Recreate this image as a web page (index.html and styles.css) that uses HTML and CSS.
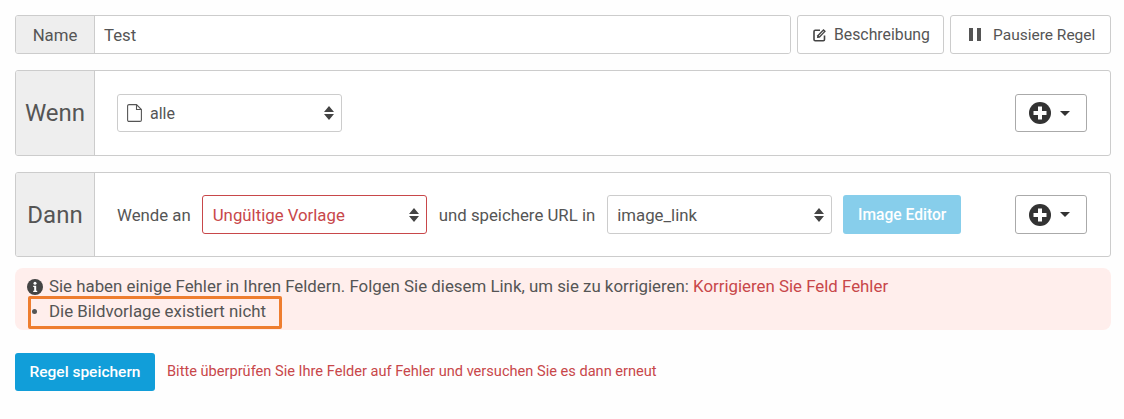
FILE: index.html
```html
<!DOCTYPE html>
<html lang="de">
<head>
<meta charset="utf-8">
<title>Regel</title>
<link rel="stylesheet" href="styles.css">
</head>
<body>
<main class="page">
  <div class="name-row">
    <div class="name-group">
      <span class="name-label">Name</span>
      <span class="name-input">Test</span>
    </div>
    <button class="btn btn-desc">
      <svg width="14" height="14" viewBox="0 0 14 14"><path d="M11.500 7.500V11.500a1.200 1.200 0 0 1-1.200 1.200H2.200A1.200 1.200 0 0 1 1 11.500V3.500a1.200 1.200 0 0 1 1.200-1.200H7" fill="none" stroke="#444" stroke-width="1.600"/><path d="M4.300 7.300 10.500.9l2.400 2.400-6.200 6.400-2.800.4z" fill="#444"/><path d="M5.800 7.700 10.400 3l.5.5-4.600 4.800z" fill="#fff"/></svg>
      <span>Beschreibung</span>
    </button>
    <button class="btn btn-pause">
      <svg width="12" height="13" viewBox="0 0 12 13"><rect x="0" y="0" width="4" height="13" fill="#555"/><rect x="8" y="0" width="4" height="13" fill="#555"/></svg>
      <span>Pausiere Regel</span>
    </button>
  </div>

  <section class="panel panel-when">
    <div class="panel-label">Wenn</div>
    <div class="panel-body">
      <div class="select select-when">
        <svg class="ico-file" width="15" height="18" viewBox="0 0 15 18"><path d="M.6 2a1.400 1.400 0 0 1 1.400-1.400H9.500L14.400 5.500V16a1.400 1.400 0 0 1-1.400 1.400H2A1.400 1.400 0 0 1 .6 16z M9.500.6V5.500H14.400" fill="none" stroke="#555" stroke-width="1.100"/></svg>
        <span class="select-text">alle</span>
        <svg class="carets" width="10" height="14" viewBox="0 0 10 14"><path d="M5 0 10 6H0zM5 14 0 8h10z" fill="#444"/></svg>
      </div>
      <button class="add-btn">
        <svg width="22" height="22" viewBox="0 0 22 22"><circle cx="11" cy="11" r="11" fill="#333"/><path d="M9 4.500h4V9h4.500v4H13v4.500H9V13H4.500V9H9z" fill="#fff"/></svg>
        <span class="caret"></span>
      </button>
    </div>
  </section>

  <section class="panel panel-then">
    <div class="panel-label">Dann</div>
    <div class="panel-body">
      <span class="inline-text">Wende an</span>
      <div class="select select-invalid">
        <span class="select-text">Ungültige Vorlage</span>
        <svg class="carets" width="10" height="14" viewBox="0 0 10 14"><path d="M5 0 10 6H0zM5 14 0 8h10z" fill="#444"/></svg>
      </div>
      <span class="inline-text text-save">und speichere URL in</span>
      <div class="select select-url">
        <span class="select-text">image_link</span>
        <svg class="carets" width="10" height="14" viewBox="0 0 10 14"><path d="M5 0 10 6H0zM5 14 0 8h10z" fill="#444"/></svg>
      </div>
      <button class="editor-btn">Image Editor</button>
      <button class="add-btn">
        <svg width="22" height="22" viewBox="0 0 22 22"><circle cx="11" cy="11" r="11" fill="#333"/><path d="M9 4.500h4V9h4.500v4H13v4.500H9V13H4.500V9H9z" fill="#fff"/></svg>
        <span class="caret"></span>
      </button>
    </div>
  </section>

  <div class="alert">
    <p class="alert-line"><svg class="ico-info" width="16" height="16" viewBox="0 0 16 16"><circle cx="8" cy="8" r="8" fill="#444"/><circle cx="8" cy="4.300" r="1.500" fill="#fff"/><path d="M6.200 6.800h3v5h1v1.300H6.200v-1.300h1V8.100h-1z" fill="#fff"/></svg>Sie haben einige Fehler in Ihren Feldern. Folgen Sie diesem Link, um sie zu korrigieren: <a class="alert-link" href="#">Korrigieren Sie Feld Fehler</a></p>
    <ul class="alert-list">
      <li>Die Bildvorlage existiert nicht</li>
    </ul>
    <div class="highlight"></div>
  </div>

  <div class="save-row">
    <button class="save-btn">Regel speichern</button>
    <span class="save-msg">Bitte überprüfen Sie Ihre Felder auf Fehler und versuchen Sie es dann erneut</span>
  </div>
</main>
</body>
</html>
```
FILE: styles.css
```css
* { box-sizing: border-box; }
html, body { margin: 0; padding: 0; background: #fefefe; }
body { font-family: Roboto, "Noto Sans", sans-serif; font-size: 16.8px; color: #555; width: 1124px; height: 419px; overflow: hidden; }
.page { padding: 15px 13px 0 15px; }
button { font-family: inherit; cursor: pointer; }

.name-row { display: flex; height: 39px; }
.name-group { display: flex; width: 776px; border: 1px solid #ccc; border-radius: 3px; overflow: hidden; }
.name-label { width: 79px; flex: none; background: #eee; border-right: 1px solid #ccc; display: flex; align-items: center; justify-content: center; }
.name-input { flex: 1; background: #fff; padding-left: 9px; display: flex; align-items: center; color: #555; }
.btn { height: 39px; background: #fff; border: 1px solid #ccc; border-radius: 3px; color: #555; font-size: 15.8px; display: flex; align-items: center; padding: 0; }
.btn-desc { width: 147px; margin-left: 6px; gap: 7px; padding-left: 15px; }
.btn-pause { width: 161px; margin-left: 6px; gap: 12px; padding-left: 18px; font-size: 15.5px; }

.panel { display: flex; width: 1096px; border: 1px solid #ccc; border-radius: 3px; background: #fff; overflow: hidden; }
.panel-when { margin-top: 16px; height: 86px; }
.panel-then { margin-top: 16px; height: 85px; }
.panel-label { width: 79px; flex: none; background: #eee; border-right: 1px solid #ccc; display: flex; align-items: center; justify-content: center; font-size: 24px; color: #555; }
.panel-body { flex: 1; display: flex; padding-left: 22px; padding-right: 23px; }
.panel-when .panel-body { align-items: flex-start; padding-top: 23px; }
.panel-then .panel-body { align-items: flex-start; padding-top: 22px; }

.select { height: 39px; width: 225px; background: #fff; border: 1px solid #ccc; border-radius: 3px; display: flex; align-items: center; padding: 0 7px 0 10px; color: #555; flex: none; }
.select-when { height: 38px; padding-left: 9px; font-size: 16px; }
.select-text { flex: 1; }
.ico-file { margin-right: 8px; flex: none; }
.carets { flex: none; }
.select-invalid { border-color: #c8474a; color: #c8474a; margin-left: 11px; }
.select-url { margin-left: 12px; padding-left: 9px; }
.inline-text { height: 39px; display: flex; align-items: center; white-space: nowrap; flex: none; }
.text-save { margin-left: 12px; }

.editor-btn { width: 118px; height: 39px; margin-left: 11px; background: #87ceeb; color: #fff; border: 0; border-radius: 3px; font-size: 15.6px; font-weight: 500; padding: 0; flex: none; }
.add-btn { width: 72px; height: 38px; margin-left: auto; background: #fff; border: 1px solid #aaa; border-radius: 3px; display: flex; align-items: center; gap: 9px; padding: 0 0 0 13px; flex: none; }
.panel-then .add-btn { height: 39px; }
.caret { width: 0; height: 0; border-left: 5px solid transparent; border-right: 5px solid transparent; border-top: 5px solid #333; }

.alert { position: relative; margin-top: 11px; width: 1096px; height: 62px; background: #ffeeec; border-radius: 8px; padding: 8px 0 0 12px; color: #555; font-size: 16.85px; }
.alert-line { margin: 0; line-height: 20px; white-space: nowrap; }
.ico-info { margin-right: 6px; vertical-align: -3px; }
.alert-link { color: #c8474a; text-decoration: none; }
.alert-list { list-style: none; margin: 5px 0 0; padding: 0 0 0 5px; line-height: 20px; }
.alert-list li { display: flex; align-items: center; gap: 12px; }
.alert-list li::before { content: ""; width: 5px; height: 5px; border-radius: 50%; background: #555; flex: none; }
.highlight { position: absolute; left: 13px; top: 28px; width: 254px; height: 33px; border: 3px solid #ee7d2f; border-radius: 2px; }

.save-row { display: flex; align-items: center; margin-top: 23px; }
.save-btn { width: 140px; height: 38px; background: #119ed9; color: #fff; border: 0; border-radius: 3px; font-size: 15.5px; font-weight: 500; padding: 0; }
.save-msg { margin-left: 12px; font-size: 14.6px; color: #c8474a; position: relative; top: -1px; }
```
